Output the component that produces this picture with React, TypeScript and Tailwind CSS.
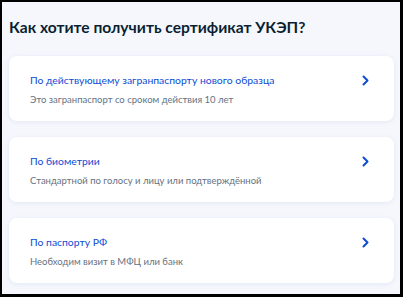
const options = [
  {
    title: 'По действующему загранпаспорту нового образца',
    hint: 'Это загранпаспорт со сроком действия 10 лет',
  },
  {
    title: 'По биометрии',
    hint: 'Стандартной по голосу и лицу или подтверждённой',
  },
  {
    title: 'По паспорту РФ',
    hint: 'Необходим визит в МФЦ или банк',
  },
];

function Chevron() {
  return (
    <svg width="7" height="11" viewBox="0 0 7 11" fill="none">
      <path d="M1.5 1.5L5.5 5.5L1.5 9.5" stroke="#0d4cd3" strokeWidth="2" strokeLinecap="round" strokeLinejoin="round" />
    </svg>
  );
}

export default function App() {
  return (
    <div
      className="w-[403px] h-[297px] overflow-hidden border-t-2 border-l-2 border-r-[3px] border-b-[3px] border-black bg-[#f5f7fc] pl-[7px] pr-[6px]"
      style={{ fontFamily: 'Lato, "Noto Sans", sans-serif' }}
    >
      <h1 className="mt-[15px] text-[15.6px] leading-[20px] font-bold text-[#0b1f33]">
        Как хотите получить сертификат УКЭП?
      </h1>

      <div className="mt-[19px] flex flex-col gap-[16px]">
        {options.map((o) => (
          <div
            key={o.title}
            className="h-[65px] rounded-[8px] bg-white pl-[21px] pr-[25px] pt-[18px] flex justify-between shadow-[0_1px_4px_rgba(173,189,224,0.25)]"
          >
            <div>
              <div className="text-[10.4px] leading-[13px] text-[#0d4cd3]">{o.title}</div>
              <div className="mt-[7px] text-[9.5px] leading-[12px] text-[#66727f]">{o.hint}</div>
            </div>
            <div className="pt-[1px]">
              <Chevron />
            </div>
          </div>
        ))}
      </div>
    </div>
  );
}
